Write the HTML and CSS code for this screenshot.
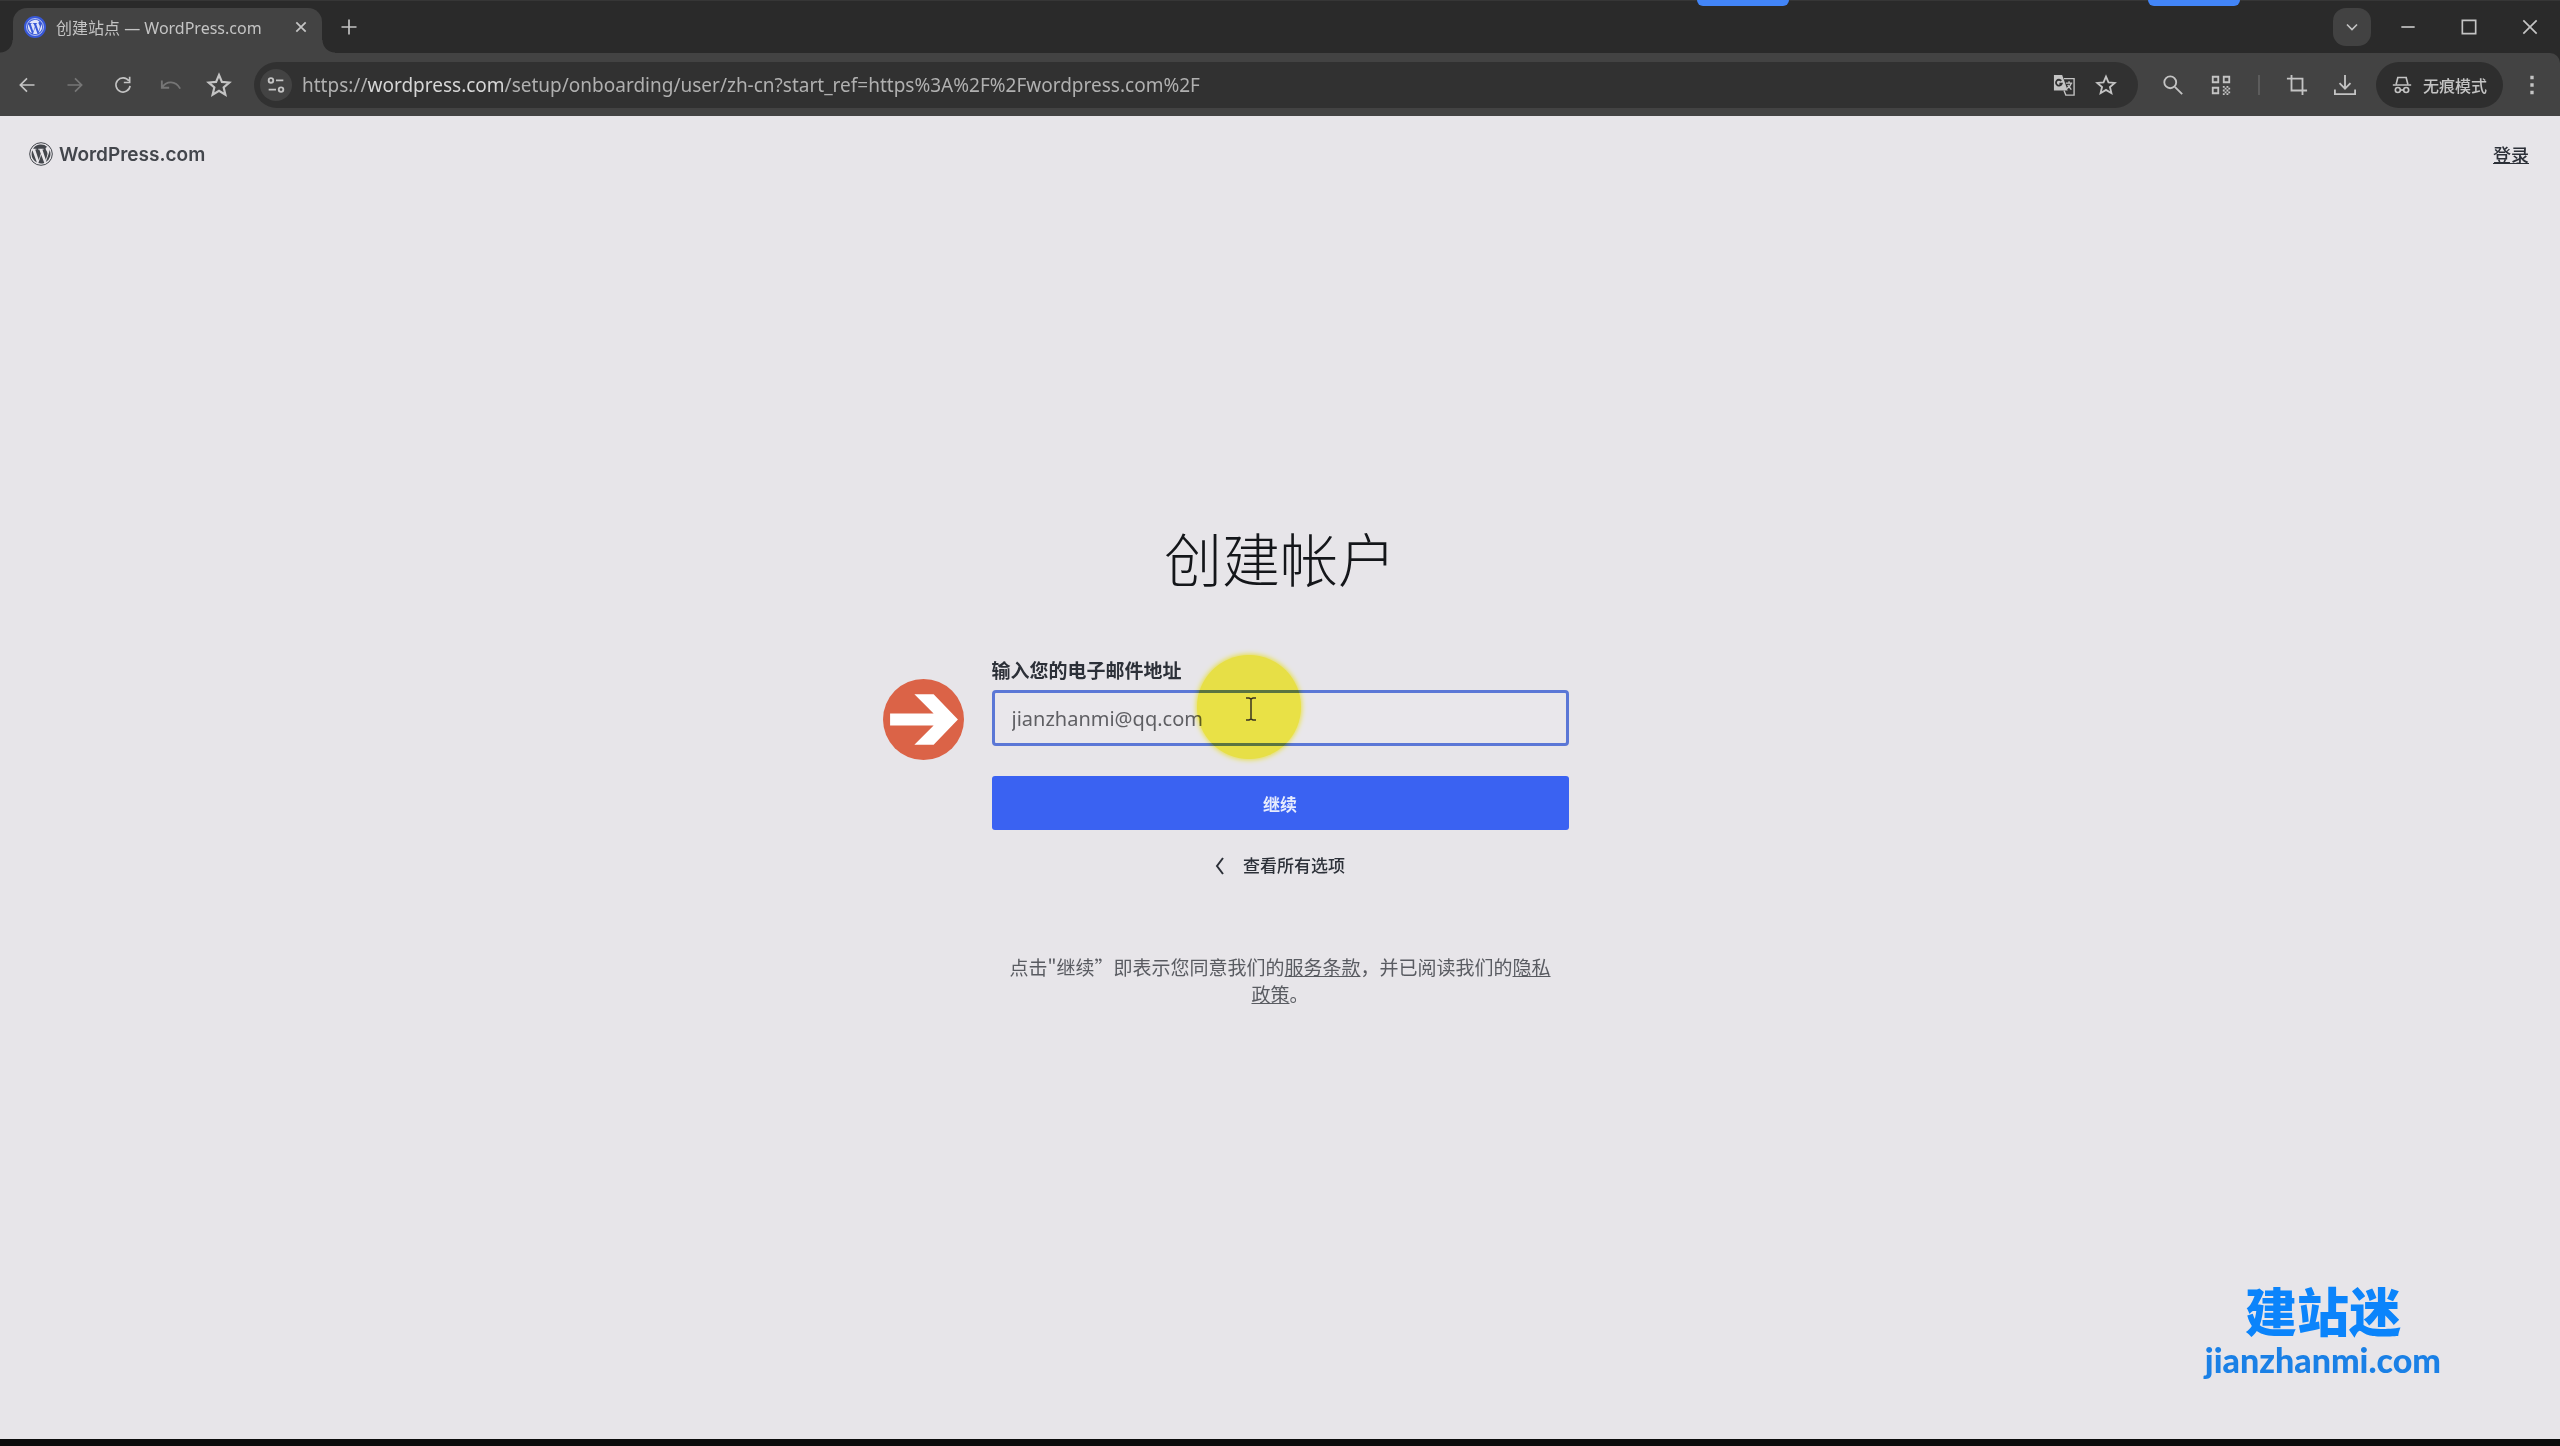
FILE: index.html
```html
<!DOCTYPE html>
<html lang="zh-CN">
<head>
    <meta charset="UTF-8">
    <meta name="viewport" content="width=device-width, initial-scale=1.0">
    <title>创建站点 — WordPress.com</title>
    <link rel="stylesheet" href="styles.css">
</head>
<body>
    <svg class="sprite" aria-hidden="true">
        <symbol id="wp" viewBox="0 0 24 24">
            <circle cx="12" cy="12" r="11.300" fill="none" stroke="currentColor" stroke-width="1"/>
            <path d="M2.600 12c0 3.700 2.200 6.900 5.300 8.400L3.400 8.200C2.900 9.300 2.600 10.600 2.600 12zm15.800-.5c0-1.200-.4-2-.8-2.600-.5-.8-1-1.500-1-2.300 0-.9.7-1.700 1.600-1.700h.1A9.400 9.400 0 0 0 4.100 6.800h.6c1 0 2.500-.1 2.500-.1.500 0 .6.700.1.800 0 0-.5.1-1.100.1l3.500 10.300 2.100-6.200-1.500-4.100-1-.1c-.5 0-.5-.8.1-.8 0 0 1.600.1 2.500.1 1 0 2.500-.1 2.500-.1.500 0 .6.700.1.800 0 0-.5.1-1.100.1l3.400 10.200 1-3.100c.4-1.300.7-2.300.7-3.100zm-6.200 1.300-2.800 8.200a9.400 9.400 0 0 0 5.800-.1v-.1zm8.100-5.300c0 .3.100.6.100 1 0 .9-.2 2-.7 3.300l-2.900 8.300A9.400 9.400 0 0 0 20.300 7.500z" fill="currentColor" stroke="none"/>
        </symbol>
        <symbol id="star" viewBox="0 0 24 24">
            <path d="M12 2.800l2.700 6.300 6.800.6-5.200 4.500 1.600 6.700-5.900-3.600-5.900 3.600 1.600-6.700-5.200-4.500 6.800-.6z" fill="none" stroke="currentColor" stroke-width="2"/>
        </symbol>
    </svg>

    <div class="browser">
        <div class="tab-strip">
            <div class="tab">
                <span class="favicon"><svg viewBox="0 0 24 24"><use href="#wp"/></svg></span>
                <span class="tab-title">创建站点 — WordPress.com</span>
                <button class="tab-close" aria-label="关闭"><svg viewBox="0 0 24 24"><path d="M4 4l16 16M20 4L4 20"/></svg></button>
            </div>
            <button class="new-tab" aria-label="打开新的标签页"><svg viewBox="0 0 24 24"><path d="M12 3v18M3 12h18"/></svg></button>
            <div class="window-controls">
                <button class="tab-search" aria-label="搜索标签页"><svg viewBox="0 0 24 24"><path d="M6 9l6 6 6-6"/></svg></button>
                <button aria-label="最小化"><svg viewBox="0 0 24 24"><path d="M4 12h16"/></svg></button>
                <button aria-label="最大化"><svg viewBox="0 0 24 24"><path d="M4 4h16v16H4z"/></svg></button>
                <button aria-label="关闭窗口"><svg viewBox="0 0 24 24"><path d="M4 4l16 16M20 4L4 20"/></svg></button>
            </div>
        </div>

        <div class="toolbar">
            <div class="nav">
                <button aria-label="返回"><svg viewBox="0 0 24 24"><path d="M21 12H4M12 4l-8 8 8 8"/></svg></button>
                <button class="disabled" aria-label="前进"><svg viewBox="0 0 24 24"><path d="M3 12h17M12 4l8 8-8 8"/></svg></button>
                <button aria-label="重新加载"><svg viewBox="0 0 24 24"><path d="M19 7a8.500 8.500 0 1 0 1.500 6M20 2v7h-7"/></svg></button>
                <button class="disabled undo" aria-label="撤消"><svg viewBox="0 0 24 24"><path d="M2 7v8h8M2 15c5-8 15-8 20 1"/></svg></button>
                <button class="bookmark" aria-label="书签"><svg viewBox="0 0 24 24"><use href="#star"/></svg></button>
            </div>
            <div class="omnibox">
                <button class="site-info" aria-label="网站信息"><svg viewBox="0 0 24 24"><circle cx="6.500" cy="7" r="2.500"/><path d="M12 7h8M4 17h8"/><circle cx="17.500" cy="17" r="2.500"/></svg></button>
                <span class="url">https://<b>wordpress.com</b>/setup/onboarding/user/zh-cn?start_ref=https%3A%2F%2Fwordpress.com%2F</span>
                <button aria-label="翻译此页"><svg viewBox="0 0 24 24"><path d="M1 1h9l6 17H1z" fill="currentColor" stroke="none"/><path d="M12 5h11v18H14l-2-5M14 10h7M17.500 8v2M20 10c-1 3-3 5-5 6M16 12l4 5" stroke-width="1.500"/><path class="cut" d="M9 7.500A3.200 3.200 0 1 0 9.500 10.500H7"/></svg></button>
                <button aria-label="为此页添加书签"><svg viewBox="0 0 24 24"><use href="#star"/></svg></button>
            </div>
            <div class="actions">
                <button aria-label="搜索"><svg viewBox="0 0 24 24"><circle cx="9" cy="9" r="6.500"/><path d="M14 14l8 8"/></svg></button>
                <button aria-label="二维码"><svg viewBox="0 0 24 24"><path d="M3 3h6v6H3zM15 3h6v6h-6zM3 15h6v6H3z"/><path d="M14 14h2M18 14h2M16 16h2M20 16h2M14 18h2M18 18h2M16 20h2M20 20h2M14 22h2M18 22h2"/></svg></button>
                <span class="divider"></span>
                <button aria-label="截图"><svg viewBox="0 0 24 24"><path d="M6 1v17h17M1 5h17v18"/></svg></button>
                <button aria-label="下载"><svg viewBox="0 0 24 24"><path d="M12 1v14M6 10l6 6 6-6M1 17v5h22v-5"/></svg></button>
            </div>
            <button class="incognito">
                <svg viewBox="0 0 24 24"><path d="M1 12h22M5 11l2-8h10l2 8"/><circle cx="7" cy="18" r="3"/><circle cx="17" cy="18" r="3"/><path d="M10 18h4"/></svg>
                无痕模式
            </button>
            <button class="menu" aria-label="菜单"><svg viewBox="0 0 24 24"><path d="M10 1h4v4h-4zM10 10h4v4h-4zM10 19h4v4h-4z" fill="currentColor" stroke="none"/></svg></button>
        </div>
        <span class="notch notch-left"></span>
        <span class="notch notch-right"></span>
    </div>

    <div class="page">
        <header class="site-header">
            <a class="logo" href="#"><svg viewBox="0 0 24 24"><use href="#wp"/></svg>WordPress.com</a>
            <a class="login" href="#">登录</a>
        </header>

        <main class="signup">
            <h1>创建帐户</h1>
            <form>
                <label for="email">输入您的电子邮件地址</label>
                <div class="field">
                    <input type="email" id="email" value="jianzhanmi@qq.com">
                    <svg class="arrow" viewBox="0 0 80 80"><circle cx="40" cy="40" r="40"/><path d="M7 34h43L31 15h19l24 25-24 25H31l19-19H7z"/></svg>
                    <span class="spotlight"></span>
                    <svg class="cursor" viewBox="0 0 12 24"><path d="M1 1h3l2 1 2-1h3M6 2v20M1 23h3l2-1 2 1h3"/></svg>
                </div>
                <button class="submit" type="submit">继续</button>
            </form>
            <a class="back" href="#"><svg viewBox="0 0 10 18"><path d="M8 1L2 9l6 8"/></svg>查看所有选项</a>
            <p class="terms">点击"继续”即表示您同意我们的<a href="#">服务条款</a>，并已阅读我们的<a href="#">隐私政策</a>。</p>
        </main>

        <div class="watermark">
            <strong>建站迷</strong>
            <span>jianzhanmi.com</span>
        </div>
    </div>
</body>
</html>
```
FILE: styles.css
```css
* {
    margin: 0;
    padding: 0;
    box-sizing: border-box;
}

body {
    display: flex;
    flex-direction: column;
    min-height: 100vh;
    background: #e7e5e9;
    border-bottom: 7px solid #0c0c0c;
    font-family: "Noto Sans", "Noto Sans CJK SC", sans-serif;
    color: #2c3038;
}

button {
    border: none;
    background: none;
    color: inherit;
    font: inherit;
    cursor: pointer;
}

a {
    color: inherit;
}

.sprite {
    position: absolute;
    width: 0;
    height: 0;
}

/* browser window */
.browser {
    position: relative;
    background: #2a2a2a;
    color: #c4c4c4;
}

.browser svg {
    display: block;
    width: 20px;
    height: 20px;
    fill: none;
    stroke: currentColor;
    stroke-width: 2;
}

.browser button {
    display: flex;
    align-items: center;
    justify-content: center;
    flex-shrink: 0;
}

.tab-strip {
    display: flex;
    align-items: center;
    height: 53px;
    padding-left: 13px;
    border-top: 1px solid #363636;
}

.tab {
    display: flex;
    align-items: center;
    align-self: flex-end;
    position: relative;
    width: 309px;
    height: 45px;
    padding: 0 14px 8px 11px;
    border-radius: 14px 14px 0 0;
    background: #434343;
    font-size: 16px;
}

.tab::before,
.tab::after {
    content: "";
    position: absolute;
    bottom: 0;
    width: 13px;
    height: 13px;
}

.tab::before {
    right: 100%;
    background: radial-gradient(circle at 0 0, #2a2a2a 12px, #434343 13px);
}

.tab::after {
    left: 100%;
    background: radial-gradient(circle at 100% 0, #2a2a2a 12px, #434343 13px);
}

.favicon {
    display: flex;
    align-items: center;
    justify-content: center;
    width: 22px;
    height: 22px;
    margin-right: 10px;
    border-radius: 50%;
    background: #3858d8;
    color: #dfe4fa;
}

.browser .favicon svg {
    width: 18px;
    height: 18px;
}

.tab-title {
    flex: 1;
    white-space: nowrap;
}

.browser .tab-close svg {
    width: 14px;
    height: 14px;
    stroke-width: 3;
}

.new-tab {
    margin-left: 17px;
}

.window-controls {
    display: flex;
    align-items: center;
    margin-left: auto;
}

.window-controls button {
    width: 61px;
    height: 38px;
}

.window-controls .tab-search {
    width: 38px;
    margin-right: 6px;
    border-radius: 13px;
    background: #424242;
}

.toolbar {
    display: flex;
    align-items: center;
    height: 63px;
    padding: 0 18px 0 12px;
    border-radius: 0 10px 0 0;
    background: #434343;
}

.nav {
    display: flex;
    gap: 18px;
    margin-right: 20px;
}

.nav button {
    width: 30px;
    height: 30px;
}

.disabled {
    opacity: 0.4;
}

.browser .undo svg,
.omnibox svg,
.actions svg {
    width: 22px;
    height: 22px;
}

.browser .bookmark svg {
    width: 26px;
    height: 26px;
}

.omnibox {
    display: flex;
    align-items: center;
    flex: 1;
    height: 46px;
    padding: 0 21px 0 6px;
    gap: 20px;
    border-radius: 23px;
    background: #313131;
}

.omnibox .site-info {
    width: 32px;
    height: 32px;
    margin-right: -10px;
    border-radius: 50%;
    background: #434343;
}

.omnibox .cut {
    stroke: #313131;
}

.url {
    flex: 1;
    font-size: 19px;
    color: #b0b0b0;
    white-space: nowrap;
}

.url b {
    font-weight: 400;
    color: #d6d6d6;
}

.actions {
    display: flex;
    align-items: center;
    gap: 26px;
    margin: 0 20px 0 24px;
}

.divider {
    width: 2px;
    height: 20px;
    background: #5c5c5c;
}

.incognito {
    gap: 11px;
    height: 46px;
    padding: 0 16px;
    border-radius: 23px;
    background: #2e2e2e;
}

.browser .incognito {
    font-family: "Noto Sans CJK SC", sans-serif;
    font-size: 16px;
    font-weight: 500;
}

.menu {
    margin-left: 19px;
}

.notch {
    position: absolute;
    top: 0;
    width: 92px;
    height: 6px;
    border-radius: 0 0 12px 12px;
    background: #4285f8;
}

.notch-left {
    right: 771px;
}

.notch-right {
    right: 320px;
}

/* sign-up page */
.page {
    position: relative;
    flex: 1;
}

.site-header {
    display: flex;
    align-items: center;
    justify-content: space-between;
    height: 76px;
    padding: 0 31px 0 29px;
}

.logo {
    display: flex;
    align-items: center;
    gap: 6px;
    font-family: Inter, sans-serif;
    font-size: 19px;
    font-weight: 600;
    color: #43464c;
    text-decoration: none;
}

.logo svg {
    width: 24px;
    height: 24px;
}

.login {
    font-family: "Noto Sans CJK SC", sans-serif;
    font-size: 18px;
    font-weight: 500;
}

.signup {
    display: flex;
    flex-direction: column;
    align-items: center;
    padding-top: 325px;
}

h1 {
    font-family: "Noto Sans CJK SC", sans-serif;
    font-size: 58px;
    font-weight: 300;
    line-height: 80px;
    color: #14161a;
}

form {
    width: 100%;
    max-width: 577px;
    margin-top: 59px;
}

label {
    display: block;
    font-size: 19px;
    font-weight: 700;
    line-height: 30px;
}

.field {
    position: relative;
    margin-top: 4px;
}

input {
    display: block;
    width: 100%;
    height: 56px;
    padding: 0 17px;
    border: 3px solid #5b77d6;
    border-radius: 4px;
    outline: none;
    background: #e9e7eb;
    font: inherit;
    font-size: 20px;
    color: #5f5f63;
}

.arrow {
    position: absolute;
    top: -11px;
    right: calc(100% + 28px);
    width: 81px;
    height: 81px;
    fill: #db6347;
}

.arrow path {
    fill: #fff;
}

.spotlight {
    position: absolute;
    top: -35px;
    left: 205px;
    width: 104px;
    height: 104px;
    border-radius: 50%;
    background: #fff94c;
    box-shadow: 0 0 5px 1px #fff94c;
    mix-blend-mode: multiply;
}

.cursor {
    position: absolute;
    top: 7px;
    left: 253px;
    width: 12px;
    height: 24px;
    fill: none;
    stroke: #3a3520;
    stroke-width: 1.5;
}

.submit {
    display: block;
    width: 100%;
    height: 54px;
    margin-top: 30px;
    border-radius: 3px;
    background: #3a62f2;
    color: #e6ebfd;
    font-size: 17px;
    font-weight: 700;
}

.back {
    display: flex;
    align-items: center;
    gap: 18px;
    margin-top: 22px;
    font-size: 17px;
    font-weight: 500;
    line-height: 28px;
    text-decoration: none;
}

.back svg {
    width: 10px;
    height: 18px;
    fill: none;
    stroke: currentColor;
    stroke-width: 2;
}

.terms {
    width: 100%;
    max-width: 554px;
    margin-top: 73px;
    font-family: "Noto Sans CJK SC", sans-serif;
    font-size: 19px;
    line-height: 27px;
    text-align: center;
    color: #595b61;
}

.watermark {
    position: absolute;
    right: 119px;
    bottom: 59px;
    display: flex;
    flex-direction: column;
    align-items: center;
    color: #0b84fb;
}

.watermark strong {
    font-family: "Noto Sans CJK SC", sans-serif;
    font-size: 52px;
    font-weight: 900;
    line-height: 60px;
}

.watermark span {
    font-family: Lato, sans-serif;
    font-size: 34px;
    font-weight: 900;
    line-height: 40px;
    color: #1a80e6;
}
```
